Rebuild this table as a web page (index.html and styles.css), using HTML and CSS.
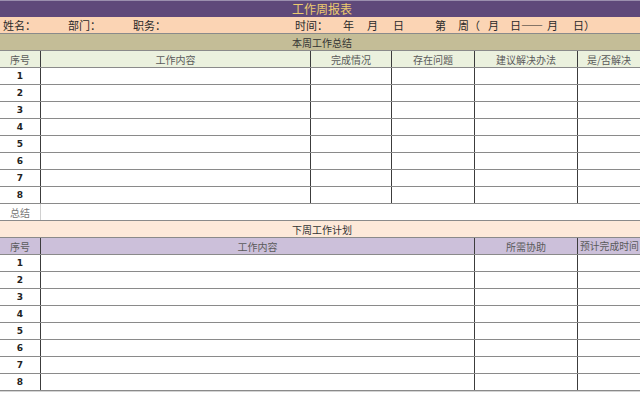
FILE: index.html
```html
<!DOCTYPE html>
<html lang="zh-CN">
<head>
<meta charset="utf-8">
<title>工作周报表</title>
<link rel="stylesheet" href="styles.css">
</head>
<body>
<div class="sheet">
  <div class="title">工作周报表</div>
  <div class="info">
    <span class="f w65">姓名：</span>
    <span class="f w65">部门：</span>
    <span class="f w162">职务：</span>
    <span class="f w48">时间：</span>
    <span class="f w24">年</span>
    <span class="f w26">月</span>
    <span class="f w42">日</span>
    <span class="f w23">第</span>
    <span class="f w30">周（</span>
    <span class="f w22">月</span>
    <span class="f w37">日——</span>
    <span class="f w26">月</span>
    <span class="f">日）</span>
  </div>
  <div class="section sec-a">本周工作总结</div>
  <div class="row cols-a head-a">
    <div class="c">序号</div><div class="c">工作内容</div><div class="c">完成情况</div><div class="c">存在问题</div><div class="c">建议解决办法</div><div class="c last">是/否解决</div>
  </div>
  <div class="row cols-a"><div class="c num">1</div><div class="c"></div><div class="c"></div><div class="c"></div><div class="c"></div><div class="c last"></div></div>
  <div class="row cols-a"><div class="c num">2</div><div class="c"></div><div class="c"></div><div class="c"></div><div class="c"></div><div class="c last"></div></div>
  <div class="row cols-a"><div class="c num">3</div><div class="c"></div><div class="c"></div><div class="c"></div><div class="c"></div><div class="c last"></div></div>
  <div class="row cols-a"><div class="c num">4</div><div class="c"></div><div class="c"></div><div class="c"></div><div class="c"></div><div class="c last"></div></div>
  <div class="row cols-a"><div class="c num">5</div><div class="c"></div><div class="c"></div><div class="c"></div><div class="c"></div><div class="c last"></div></div>
  <div class="row cols-a"><div class="c num">6</div><div class="c"></div><div class="c"></div><div class="c"></div><div class="c"></div><div class="c last"></div></div>
  <div class="row cols-a"><div class="c num">7</div><div class="c"></div><div class="c"></div><div class="c"></div><div class="c"></div><div class="c last"></div></div>
  <div class="row cols-a"><div class="c num">8</div><div class="c"></div><div class="c"></div><div class="c"></div><div class="c"></div><div class="c last"></div></div>
  <div class="row cols-sum">
    <div class="c sum-label">总结</div><div class="c last"></div>
  </div>
  <div class="section sec-b">下周工作计划</div>
  <div class="row cols-b head-b">
    <div class="c">序号</div><div class="c">工作内容</div><div class="c">所需协助</div><div class="c last start">预计完成时间</div>
  </div>
  <div class="row cols-b"><div class="c num">1</div><div class="c"></div><div class="c"></div><div class="c last"></div></div>
  <div class="row cols-b"><div class="c num">2</div><div class="c"></div><div class="c"></div><div class="c last"></div></div>
  <div class="row cols-b"><div class="c num">3</div><div class="c"></div><div class="c"></div><div class="c last"></div></div>
  <div class="row cols-b"><div class="c num">4</div><div class="c"></div><div class="c"></div><div class="c last"></div></div>
  <div class="row cols-b"><div class="c num">5</div><div class="c"></div><div class="c"></div><div class="c last"></div></div>
  <div class="row cols-b"><div class="c num">6</div><div class="c"></div><div class="c"></div><div class="c last"></div></div>
  <div class="row cols-b"><div class="c num">7</div><div class="c"></div><div class="c"></div><div class="c last"></div></div>
  <div class="row cols-b"><div class="c num">8</div><div class="c"></div><div class="c"></div><div class="c last"></div></div>
</div>
</body>
</html>
```

FILE: styles.css
```css
html, body {
  margin: 0;
  padding: 0;
  background: #ffffff;
  overflow: hidden;
}

body {
  font-family: "Noto Sans CJK SC", "Liberation Serif", serif;
  color: #333333;
}

.sheet {
  width: 640px;
  display: flex;
  flex-direction: column;
  border-bottom: 1px solid #d4d4d4;
}

.title {
  height: 17px;
  box-sizing: border-box;
  border-top: 1px solid #9b8fae;
  background: #5f497a;
  color: #eccb6e;
  font-size: 12px;
  line-height: 16px;
  text-align: center;
  padding-left: 4px;
}

.info {
  height: 17px;
  box-sizing: border-box;
  background: #fbd4b4;
  border-bottom: 1px solid #8a8a8a;
  display: flex;
  align-items: center;
  padding-left: 3px;
  padding-top: 1px;
  font-size: 11px;
  color: #2a2a2a;
  white-space: nowrap;
}

.f { flex: none; display: block; line-height: 15px; }
.w22 { width: 22px; }
.w23 { width: 23px; }
.w24 { width: 24px; }
.w26 { width: 26px; }
.w30 { width: 30px; }
.w37 { width: 37px; }
.w42 { width: 42px; }
.w48 { width: 48px; }
.w65 { width: 65px; }
.w162 { width: 162px; }

.section {
  height: 17px;
  box-sizing: border-box;
  border-bottom: 1px solid #8a8a8a;
  font-size: 10px;
  line-height: 16px;
  text-align: center;
  padding-left: 4px;
  padding-top: 1px;
  color: #333333;
}

.sec-a { background: #c4bd97; }
.sec-b { background: #fde9d9; }

.row {
  height: 17px;
  box-sizing: border-box;
  border-bottom: 1px solid #8a8a8a;
  display: grid;
  background: #ffffff;
}

.cols-a { grid-template-columns: 41px 270px 81px 83px 103px 1fr; }
.cols-b { grid-template-columns: 41px 434px 103px 1fr; }
.cols-sum { grid-template-columns: 41px 1fr; }

.c {
  border-right: 1px solid #3c3c3c;
  display: flex;
  align-items: center;
  justify-content: center;
  padding-top: 1px;
  font-size: 10px;
  line-height: 15px;
  color: #5a5a5a;
  overflow: hidden;
  white-space: nowrap;
}

.c.last { border-right: none; }
.c.start { justify-content: flex-start; padding-left: 2px; font-size: 9.8px; }

.head-a { background: #ebf1de; }
.head-b { background: #ccc0da; }

.num {
  font-family: "DejaVu Sans", "Liberation Sans", sans-serif;
  font-weight: bold;
  font-size: 9px;
  color: #222222;
}

.sum-label {
  border-right: 1px solid #d0d0d0;
  color: #777777;
}
```
